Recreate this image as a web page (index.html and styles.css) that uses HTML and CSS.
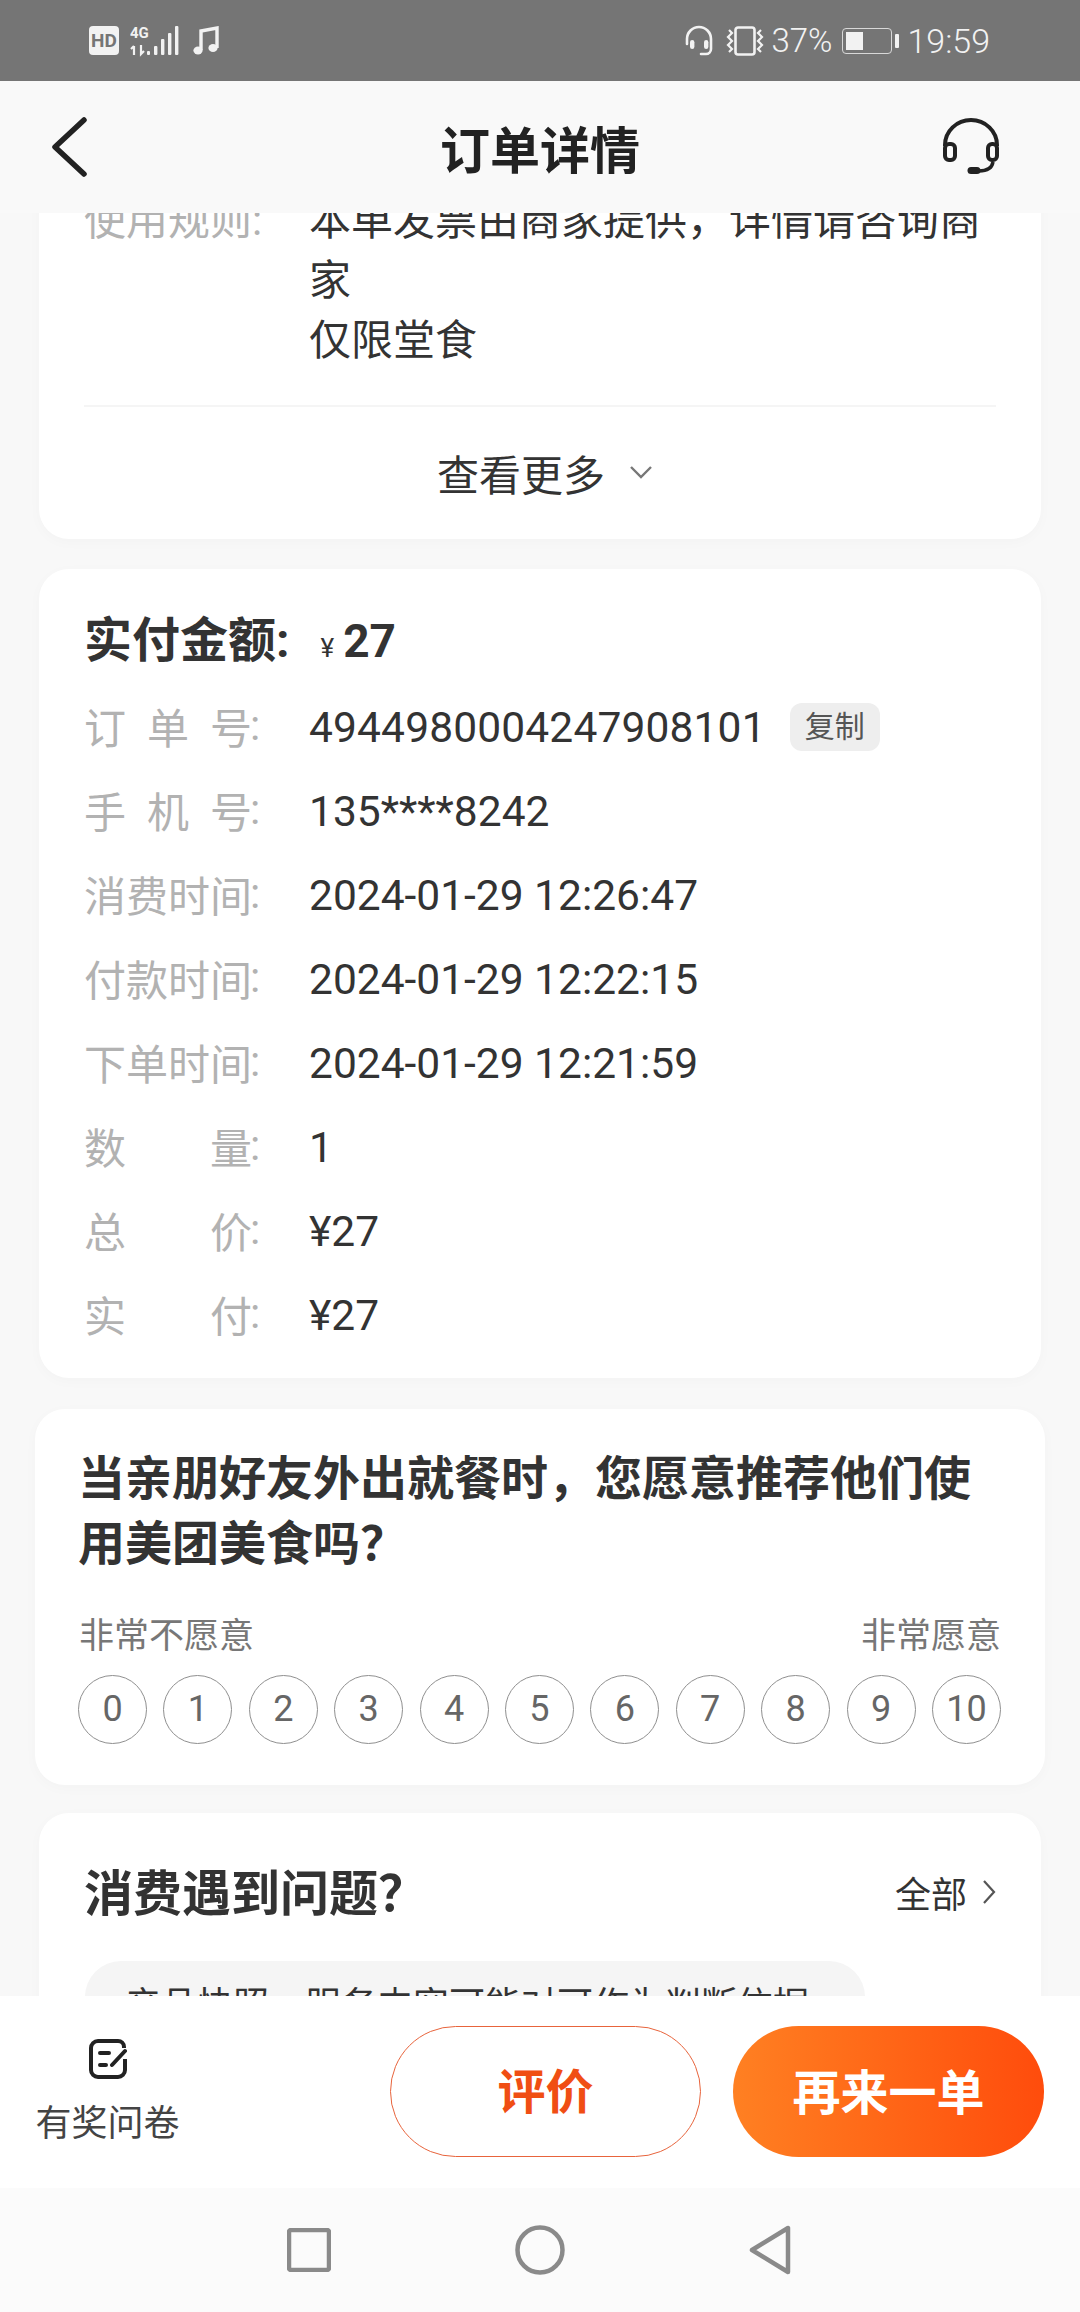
FILE: index.html
```html
<!DOCTYPE html>
<html lang="zh">
  <head>
    <meta charset="utf-8" />
    <title>订单详情</title>
    <link rel="stylesheet" href="styles.css" />
  </head>
  <body>
    <div class="status">
      <div class="status-left">
        <div class="hd">HD</div>
        <svg class="signal" width="50" height="32" viewBox="0 0 50 32">
          <text class="net" x="0" y="13">4G</text>
          <path d="M4 21v9M1 24l3-3M11 20v9l3-3" fill="none" stroke="#f2f2f2" stroke-width="2.2" />
          <rect x="17" y="26" width="3" height="4" rx="1" fill="#f2f2f2" />
          <rect x="24" y="21" width="3.4" height="9" rx="1" fill="#f2f2f2" />
          <rect x="31" y="14" width="3.4" height="16" rx="1" fill="#f2f2f2" />
          <rect x="38" y="8" width="3.4" height="22" rx="1" fill="#f2f2f2" />
          <rect x="45" y="1" width="3.4" height="29" rx="1" fill="#f2f2f2" />
        </svg>
        <svg class="music" width="26" height="30" viewBox="0 0 26 30">
          <path d="M8 24V5L24 2v20" fill="none" stroke="#f2f2f2" stroke-width="3.4" />
          <ellipse cx="5" cy="24.5" rx="4.6" ry="4" fill="#f2f2f2" />
          <ellipse cx="20" cy="22" rx="4.6" ry="4" fill="#f2f2f2" />
        </svg>
      </div>
      <div class="status-right">
        <svg width="30" height="32" viewBox="0 0 30 32">
          <path d="M3 19v-5a12 12 0 0 1 24 0v5M27 19v5a5 5 0 0 1-5 5h-5" fill="none" stroke="#f2f2f2" stroke-width="2.6" stroke-linecap="round" />
          <rect x="6" y="15" width="4.4" height="9" rx="2.2" fill="#f2f2f2" />
          <rect x="20" y="15" width="4.4" height="9" rx="2.2" fill="#f2f2f2" />
        </svg>
        <svg class="vibrate" width="42" height="30" viewBox="0 0 42 30">
          <rect x="11.5" y="1.5" width="19" height="27" rx="2.5" fill="none" stroke="#f2f2f2" stroke-width="2.6" />
          <path d="M5 4l3 3-4 4 4 4-4 4 4 4-3 3M37 4l-3 3 4 4-4 4 4 4-4 4 3 3" fill="none" stroke="#f2f2f2" stroke-width="2.2" />
        </svg>
        <span class="pct">37%</span>
        <div class="battery">
          <div class="battery-body"><div class="battery-fill"></div></div>
          <div class="battery-tip"></div>
        </div>
        <span class="time">19:59</span>
      </div>
    </div>

    <div class="nav">
      <div class="nav-side">
        <svg width="36" height="60" viewBox="0 0 36 60">
          <path d="M33 3L4 30l29 27" fill="none" stroke="#222" stroke-width="5.5" stroke-linecap="round" stroke-linejoin="round" />
        </svg>
      </div>
      <div class="nav-title">订单详情</div>
      <div class="nav-side nav-side-right">
        <svg width="62" height="60" viewBox="0 0 62 60">
          <path d="M4 29v-1a26 25 0 0 1 52 0v1" fill="none" stroke="#222" stroke-width="4" />
          <rect x="4" y="27" width="10" height="16" rx="4" fill="none" stroke="#222" stroke-width="4" />
          <rect x="47" y="27" width="9" height="16" rx="4" fill="none" stroke="#222" stroke-width="4" />
          <path d="M52 45c-1 6-6 9-14 9" fill="none" stroke="#222" stroke-width="3.5" />
          <path d="M30 53.5h6" fill="none" stroke="#222" stroke-width="7" stroke-linecap="round" />
        </svg>
      </div>
    </div>

    <div class="scroller">
      <div class="card card-rules">
        <div class="row-rule">
          <div class="rule-label">使用规则:</div>
          <div class="rule-text">本单发票由商家提供，详情请咨询商家<br />仅限堂食</div>
        </div>
        <div class="divider"></div>
        <div class="more">
          <span>查看更多</span>
          <svg width="24" height="14" viewBox="0 0 24 14">
            <path d="M2 2l10 10L22 2" fill="none" stroke="#777" stroke-width="2.4" />
          </svg>
        </div>
      </div>

      <div class="card card-order">
        <div class="paid">
          <span class="paid-label">实付金额:</span>
          <span class="paid-yen">¥</span>
          <span class="paid-num">27</span>
        </div>
        <div class="row"><span class="label">订单号</span><span class="colon">:</span><span class="value value-order">4944980004247908101</span><span class="copy">复制</span></div>
        <div class="row"><span class="label">手机号</span><span class="colon">:</span><span class="value">135****8242</span></div>
        <div class="row"><span class="label">消费时间</span><span class="colon">:</span><span class="value">2024-01-29 12:26:47</span></div>
        <div class="row"><span class="label">付款时间</span><span class="colon">:</span><span class="value">2024-01-29 12:22:15</span></div>
        <div class="row"><span class="label">下单时间</span><span class="colon">:</span><span class="value">2024-01-29 12:21:59</span></div>
        <div class="row"><span class="label">数量</span><span class="colon">:</span><span class="value">1</span></div>
        <div class="row"><span class="label">总价</span><span class="colon">:</span><span class="value">¥27</span></div>
        <div class="row"><span class="label">实付</span><span class="colon">:</span><span class="value">¥27</span></div>
      </div>

      <div class="card card-survey">
        <div class="survey-title">当亲朋好友外出就餐时，您愿意推荐他们使用美团美食吗？</div>
        <div class="survey-ends"><span>非常不愿意</span><span>非常愿意</span></div>
        <div class="scores">
          <div class="score">0</div>
          <div class="score">1</div>
          <div class="score">2</div>
          <div class="score">3</div>
          <div class="score">4</div>
          <div class="score">5</div>
          <div class="score">6</div>
          <div class="score">7</div>
          <div class="score">8</div>
          <div class="score">9</div>
          <div class="score">10</div>
        </div>
      </div>

      <div class="card card-help">
        <div class="help-head">
          <div class="help-title">消费遇到问题？</div>
          <div class="help-all">
            <span>全部</span>
            <svg width="14" height="26" viewBox="0 0 14 26">
              <path d="M2 2l10 11L2 24" fill="none" stroke="#555" stroke-width="2.2" />
            </svg>
          </div>
        </div>
        <div class="help-pill">产品快照、服务内容可能对可作为判断依据 &gt;</div>
      </div>
    </div>

    <div class="actions">
      <div class="survey-link">
        <svg width="38" height="40" viewBox="0 0 38 40">
          <path d="M35 9V8a6 6 0 0 0-6-6H9a7 7 0 0 0-7 7v22a7 7 0 0 0 7 7h20a7 7 0 0 0 7-7V20" fill="none" stroke="#222" stroke-width="4" />
          <path d="M11 14h9M11 26h6M23 26L36 12" fill="none" stroke="#222" stroke-width="4" stroke-linecap="round" />
        </svg>
        <span>有奖问卷</span>
      </div>
      <div class="btn btn-line">评价</div>
      <div class="btn btn-fill">再来一单</div>
    </div>

    <div class="sysnav">
      <svg width="44" height="44" viewBox="0 0 44 44">
        <rect x="2" y="2" width="40" height="40" rx="2" fill="none" stroke="#8a8a8a" stroke-width="4.5" />
      </svg>
      <svg width="50" height="50" viewBox="0 0 50 50">
        <circle cx="25" cy="25" r="22.5" fill="none" stroke="#8a8a8a" stroke-width="4.5" />
      </svg>
      <svg width="44" height="50" viewBox="0 0 44 50">
        <path d="M39 3v44L3 25z" fill="none" stroke="#8a8a8a" stroke-width="4.5" stroke-linejoin="round" />
      </svg>
    </div>
  </body>
</html>
```

FILE: styles.css
```css
body {
  margin: 0;
  width: 1080px;
  height: 2312px;
  overflow: hidden;
  display: flex;
  flex-direction: column;
  background-color: #f8f8f8;
  color: #333;
  font-family: Roboto, "Noto Sans CJK SC", sans-serif;
}

/* barra de estado */
.status {
  height: 81px;
  flex: none;
  display: flex;
  justify-content: space-between;
  align-items: center;
  padding: 0 90px 0 89px;
  background-color: #757575;
  color: #f2f2f2;
}
.status-left,
.status-right {
  display: flex;
  align-items: center;
}
.hd {
  width: 30px;
  height: 29px;
  border-radius: 4px;
  background-color: #f2f2f2;
  color: #757575;
  font-size: 19px;
  font-weight: 700;
  line-height: 29px;
  text-align: center;
}
.signal {
  margin-left: 11px;
}
.net {
  font-family: Roboto, sans-serif;
  font-size: 15px;
  font-weight: 700;
  fill: #f2f2f2;
}
.music {
  margin-left: 13px;
}
.vibrate {
  margin-left: 10px;
}
.pct {
  margin-left: 5px;
  font-size: 33px;
  font-weight: 300;
}
.battery {
  display: flex;
  align-items: center;
  margin-left: 10px;
}
.battery-body {
  width: 50px;
  height: 26px;
  box-sizing: border-box;
  padding: 3px;
  border: 1.5px solid #d8d8d8;
  border-radius: 4px;
}
.battery-fill {
  width: 17px;
  height: 100%;
  background-color: #f2f2f2;
}
.battery-tip {
  width: 4px;
  height: 14px;
  margin-left: 3px;
  border-radius: 1px;
  background-color: #f2f2f2;
}
.time {
  margin-left: 8px;
  font-size: 34px;
  font-weight: 300;
}

/* cabecera */
.nav {
  height: 132px;
  flex: none;
  display: flex;
  justify-content: space-between;
  align-items: center;
  background-color: #f9f9f9;
}
.nav-side {
  width: 300px;
  box-sizing: border-box;
  display: flex;
  padding-left: 51px;
}
.nav-side-right {
  justify-content: flex-end;
  padding-left: 0;
  padding-right: 77px;
}
.nav-title {
  font-size: 50px;
  font-weight: 700;
  color: #222;
}

/* contenido */
.scroller {
  flex: 1;
  min-height: 0;
  overflow: hidden;
  padding: 0 39px;
}
.card {
  border-radius: 30px;
  background-color: #fff;
  box-shadow: 0 3px 14px rgba(0, 0, 0, 0.025);
}
.card-rules {
  margin-top: -60px;
  padding: 38px 45px 0;
}
.row-rule {
  display: flex;
  font-size: 42px;
  line-height: 60px;
}
.rule-label {
  width: 225px;
  flex: none;
  color: #b2b2b2;
}
.divider {
  height: 2px;
  margin-top: 34px;
  background-color: #f5f5f5;
}
.more {
  display: flex;
  justify-content: center;
  align-items: center;
  gap: 24px;
  height: 56px;
  padding: 37px 0 39px 10px;
  font-size: 42px;
}

.card-order {
  margin-top: 30px;
  padding: 40px 45px 21px;
}
.paid {
  display: flex;
  align-items: baseline;
  height: 64px;
  margin-bottom: 12px;
  line-height: 64px;
}
.paid-label {
  font-size: 48px;
  font-weight: 700;
}
.paid-yen {
  margin-left: 31px;
  font-size: 26px;
}
.paid-num {
  margin-left: 9px;
  font-size: 46px;
  font-weight: 700;
}
.row {
  display: flex;
  align-items: center;
  height: 84px;
  font-size: 42.5px;
}
.label {
  width: 168px;
  margin-bottom: 4px;
  font-size: 42px;
  text-align: justify;
  text-align-last: justify;
  color: #b2b2b2;
}
.colon {
  width: 59px;
  margin-left: -2px;
  margin-bottom: 4px;
  box-sizing: border-box;
  color: #b2b2b2;
}
.value {
  color: #333;
}
.value-order {
  letter-spacing: 0.15px;
}
.copy {
  margin-left: 24px;
  width: 90px;
  height: 48px;
  border-radius: 12px;
  background-color: #eee;
  color: #555;
  font-size: 30px;
  line-height: 48px;
  text-align: center;
}

.card-survey {
  margin: 31px -4px 0;
  padding: 37px 44px 41px;
}
.survey-title {
  font-size: 47px;
  font-weight: 700;
  line-height: 65px;
  margin-left: -1px;
  margin-right: -2px;
}
.survey-ends {
  display: flex;
  justify-content: space-between;
  margin-top: 36px;
  font-size: 35px;
  line-height: 50px;
  color: #777;
}
.scores {
  display: flex;
  justify-content: space-between;
  margin-top: 13px;
  margin-left: -1px;
}
.score {
  width: 69px;
  height: 69px;
  box-sizing: border-box;
  border: 1.5px solid #8f8f8f;
  border-radius: 50%;
  color: #666;
  font-size: 36px;
  line-height: 66px;
  text-align: center;
}

.card-help {
  margin-top: 28px;
  height: 400px;
  padding: 44px 45px 0;
}
.help-head {
  display: flex;
  justify-content: space-between;
  align-items: center;
  height: 70px;
}
.help-title {
  margin-bottom: 6px;
  font-size: 49px;
  font-weight: 700;
}
.help-all {
  display: flex;
  align-items: center;
  gap: 15px;
  font-size: 36px;
}
.help-pill {
  width: 780px;
  box-sizing: border-box;
  margin-top: 34px;
  margin-left: 1px;
  padding: 20px 40px;
  border-radius: 36px;
  background-color: #f5f5f5;
  font-size: 36px;
  line-height: 50px;
  white-space: nowrap;
}

/* barra inferior */
.actions {
  height: 192px;
  flex: none;
  box-sizing: border-box;
  display: flex;
  gap: 32px;
  padding: 30px 36px 0;
  background-color: #fff;
}
.survey-link {
  width: 143px;
  flex: none;
  margin-right: 179px;
  display: flex;
  flex-direction: column;
  align-items: center;
  padding-top: 13px;
  font-size: 36px;
  line-height: 50px;
  color: #444;
  white-space: nowrap;
}
.survey-link svg {
  flex: none;
  margin-bottom: 20px;
}
.btn {
  width: 311px;
  height: 131px;
  flex: none;
  box-sizing: border-box;
  border-radius: 66px;
  font-size: 48px;
  font-weight: 700;
  line-height: 135px;
  text-align: center;
}
.btn-line {
  border: 1.5px solid #e8643c;
  color: #f04e13;
  line-height: 132px;
}
.btn-fill {
  background: linear-gradient(90deg, #ff8022, #ff4c0c);
  color: #fff;
}

/* navegacion del sistema */
.sysnav {
  height: 124px;
  flex: none;
  box-sizing: border-box;
  display: flex;
  align-items: center;
  justify-content: center;
  gap: 184px;
  background-color: #fbfbfb;
}
```
